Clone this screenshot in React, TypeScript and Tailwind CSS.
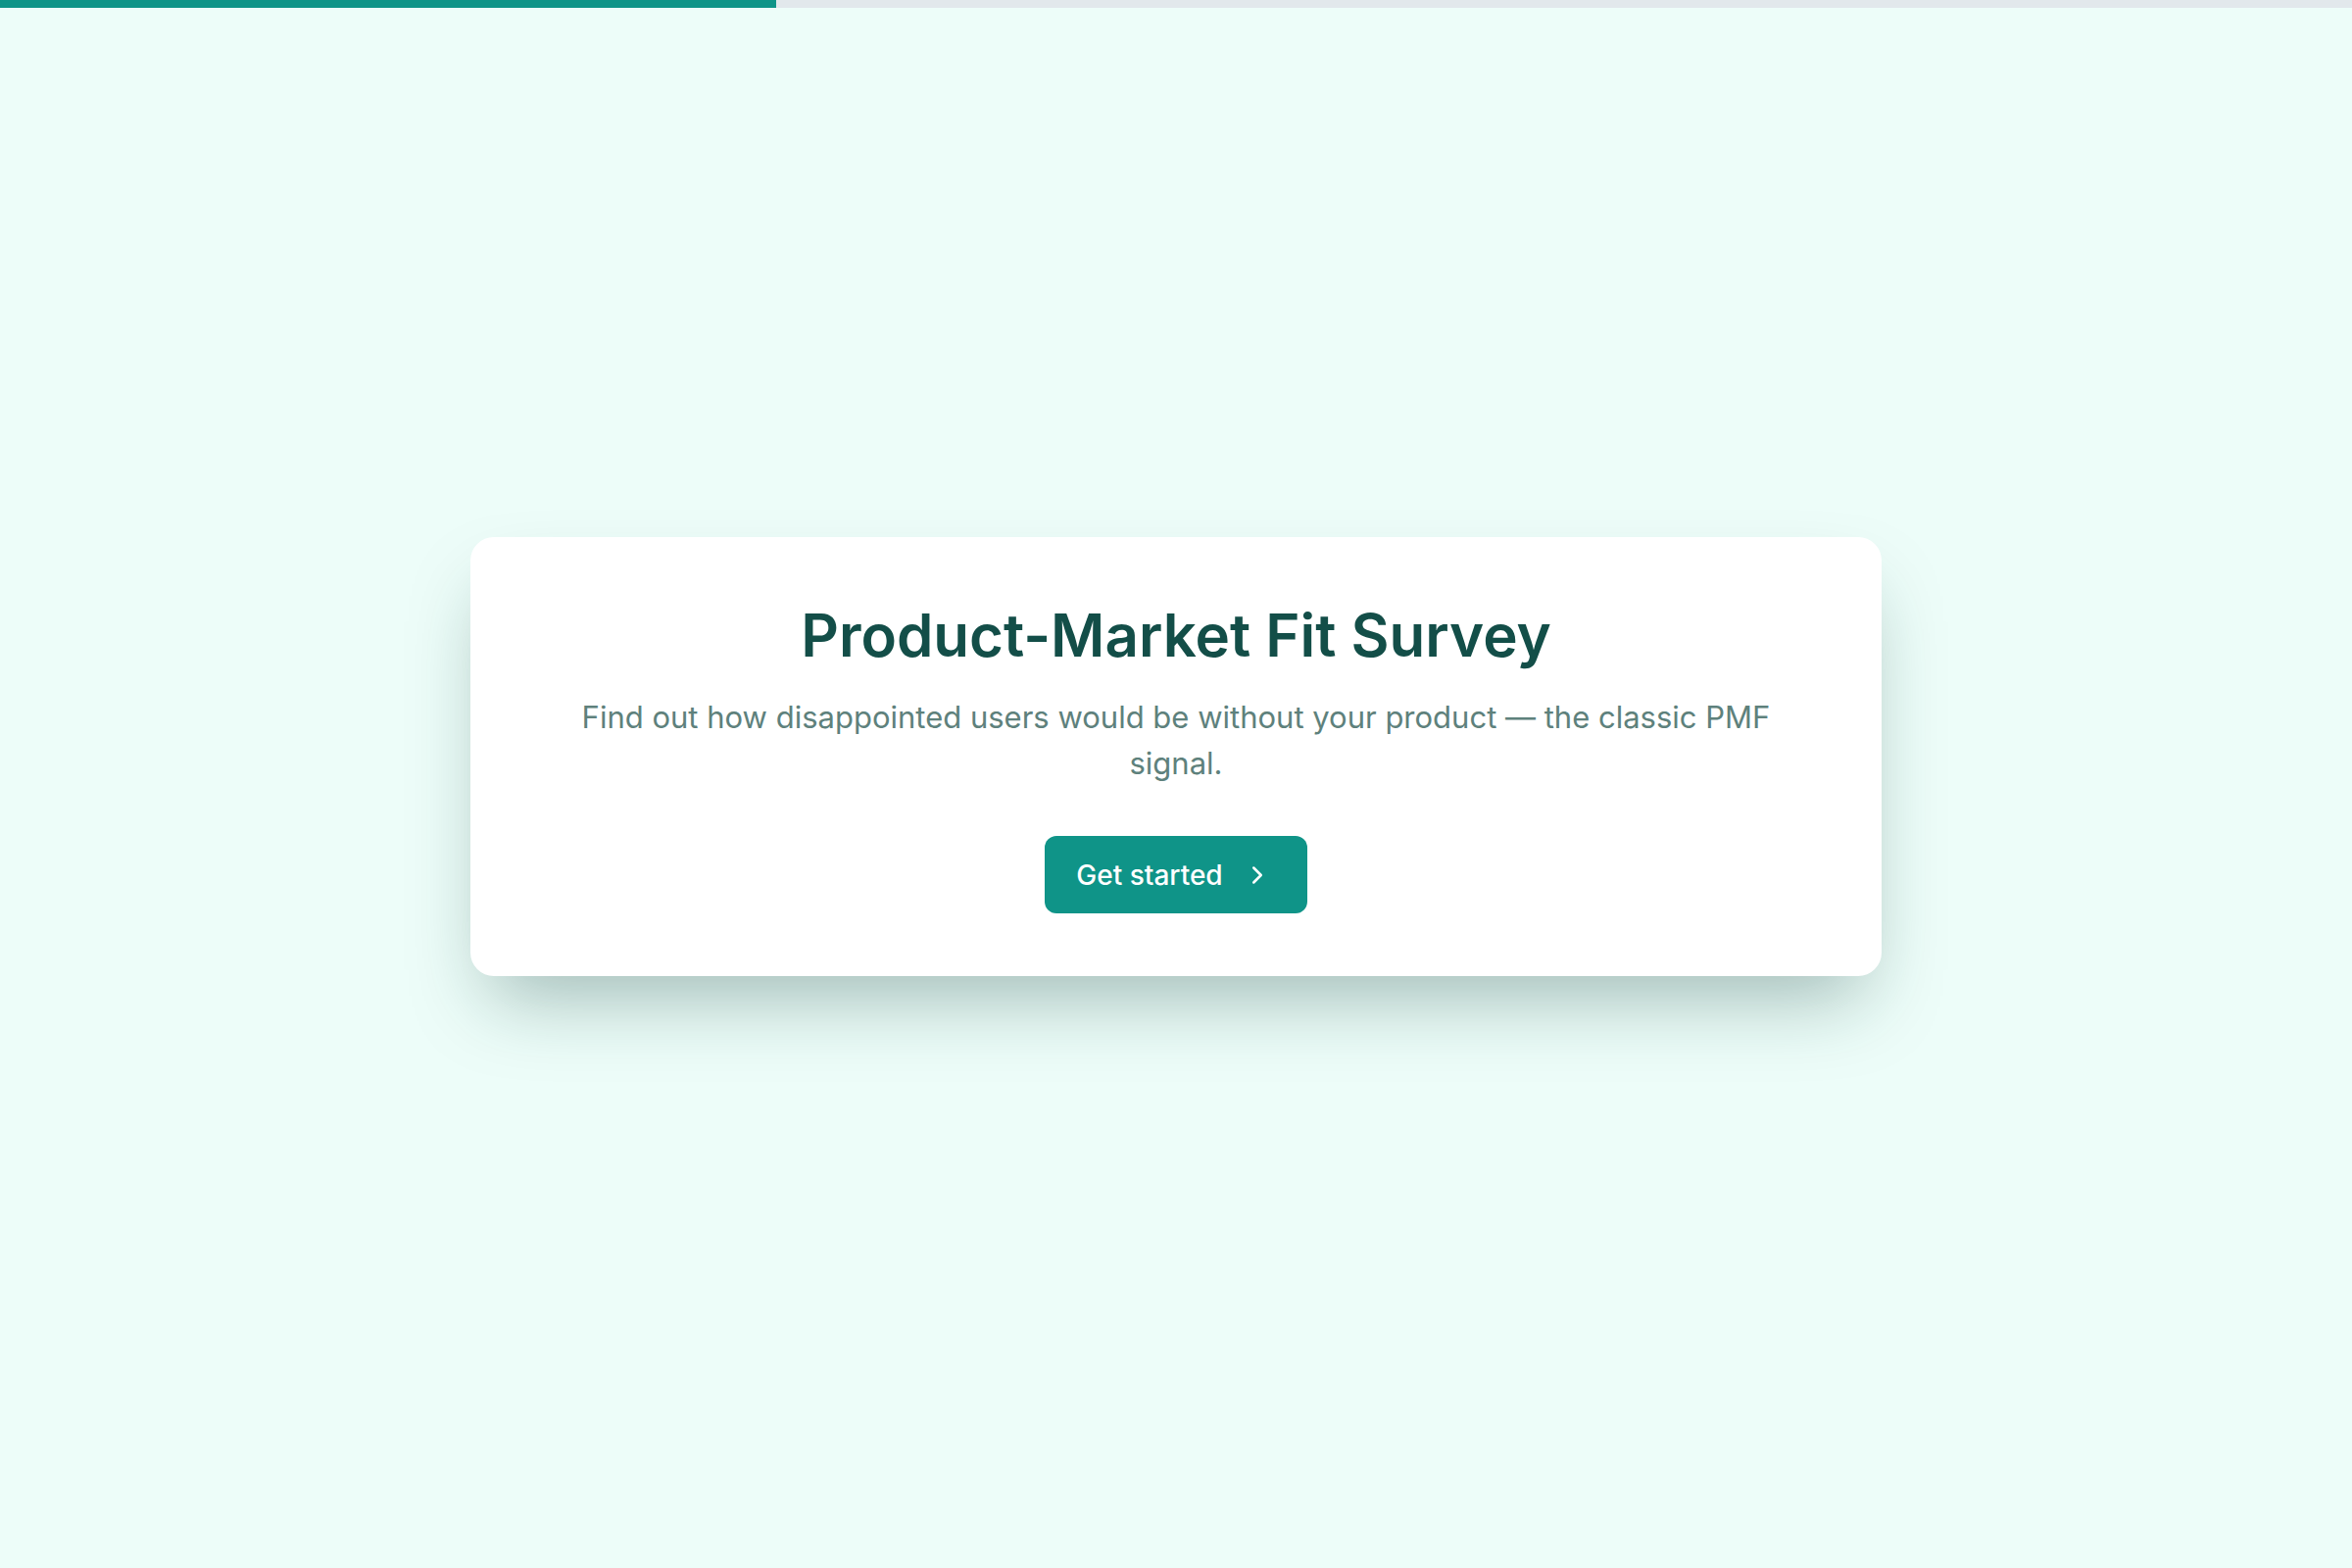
import { ChevronRight } from "lucide-react";

const FONT = "font-['Inter','Noto_Sans',sans-serif]";

export default function App() {
  return (
    <div className={`flex min-h-screen w-full flex-col bg-[#edfdf9] ${FONT}`}>
      {/* progress */}
      <div className="h-2 w-full bg-[#e2e8ec]">
        <div className="h-full w-[33%] bg-[#0f9488]" />
      </div>

      <div className="flex flex-1 items-center justify-center pb-[64px]">
        <div className="flex w-[1440px] flex-col items-center rounded-3xl bg-white px-16 pt-[64px] pb-16 text-center shadow-[0_40px_80px_-20px_rgba(15,60,55,0.35)]">
          <h1 className="text-[60px] leading-[1.2] font-semibold text-[#134e48]">
            Product-Market Fit Survey
          </h1>
          <p className="mt-6 max-w-[1260px] text-[31px] leading-[47px] text-[#5e817c]">
            Find out how disappointed users would be without your product — the classic PMF signal.
          </p>
          <button className="mt-[51px] flex h-[79px] items-center gap-5 rounded-[12px] bg-[#0f9488] pr-9 pl-8 text-[28px] font-medium text-white">
            Get started
            <ChevronRight size={30} strokeWidth={2} />
          </button>
        </div>
      </div>
    </div>
  );
}
